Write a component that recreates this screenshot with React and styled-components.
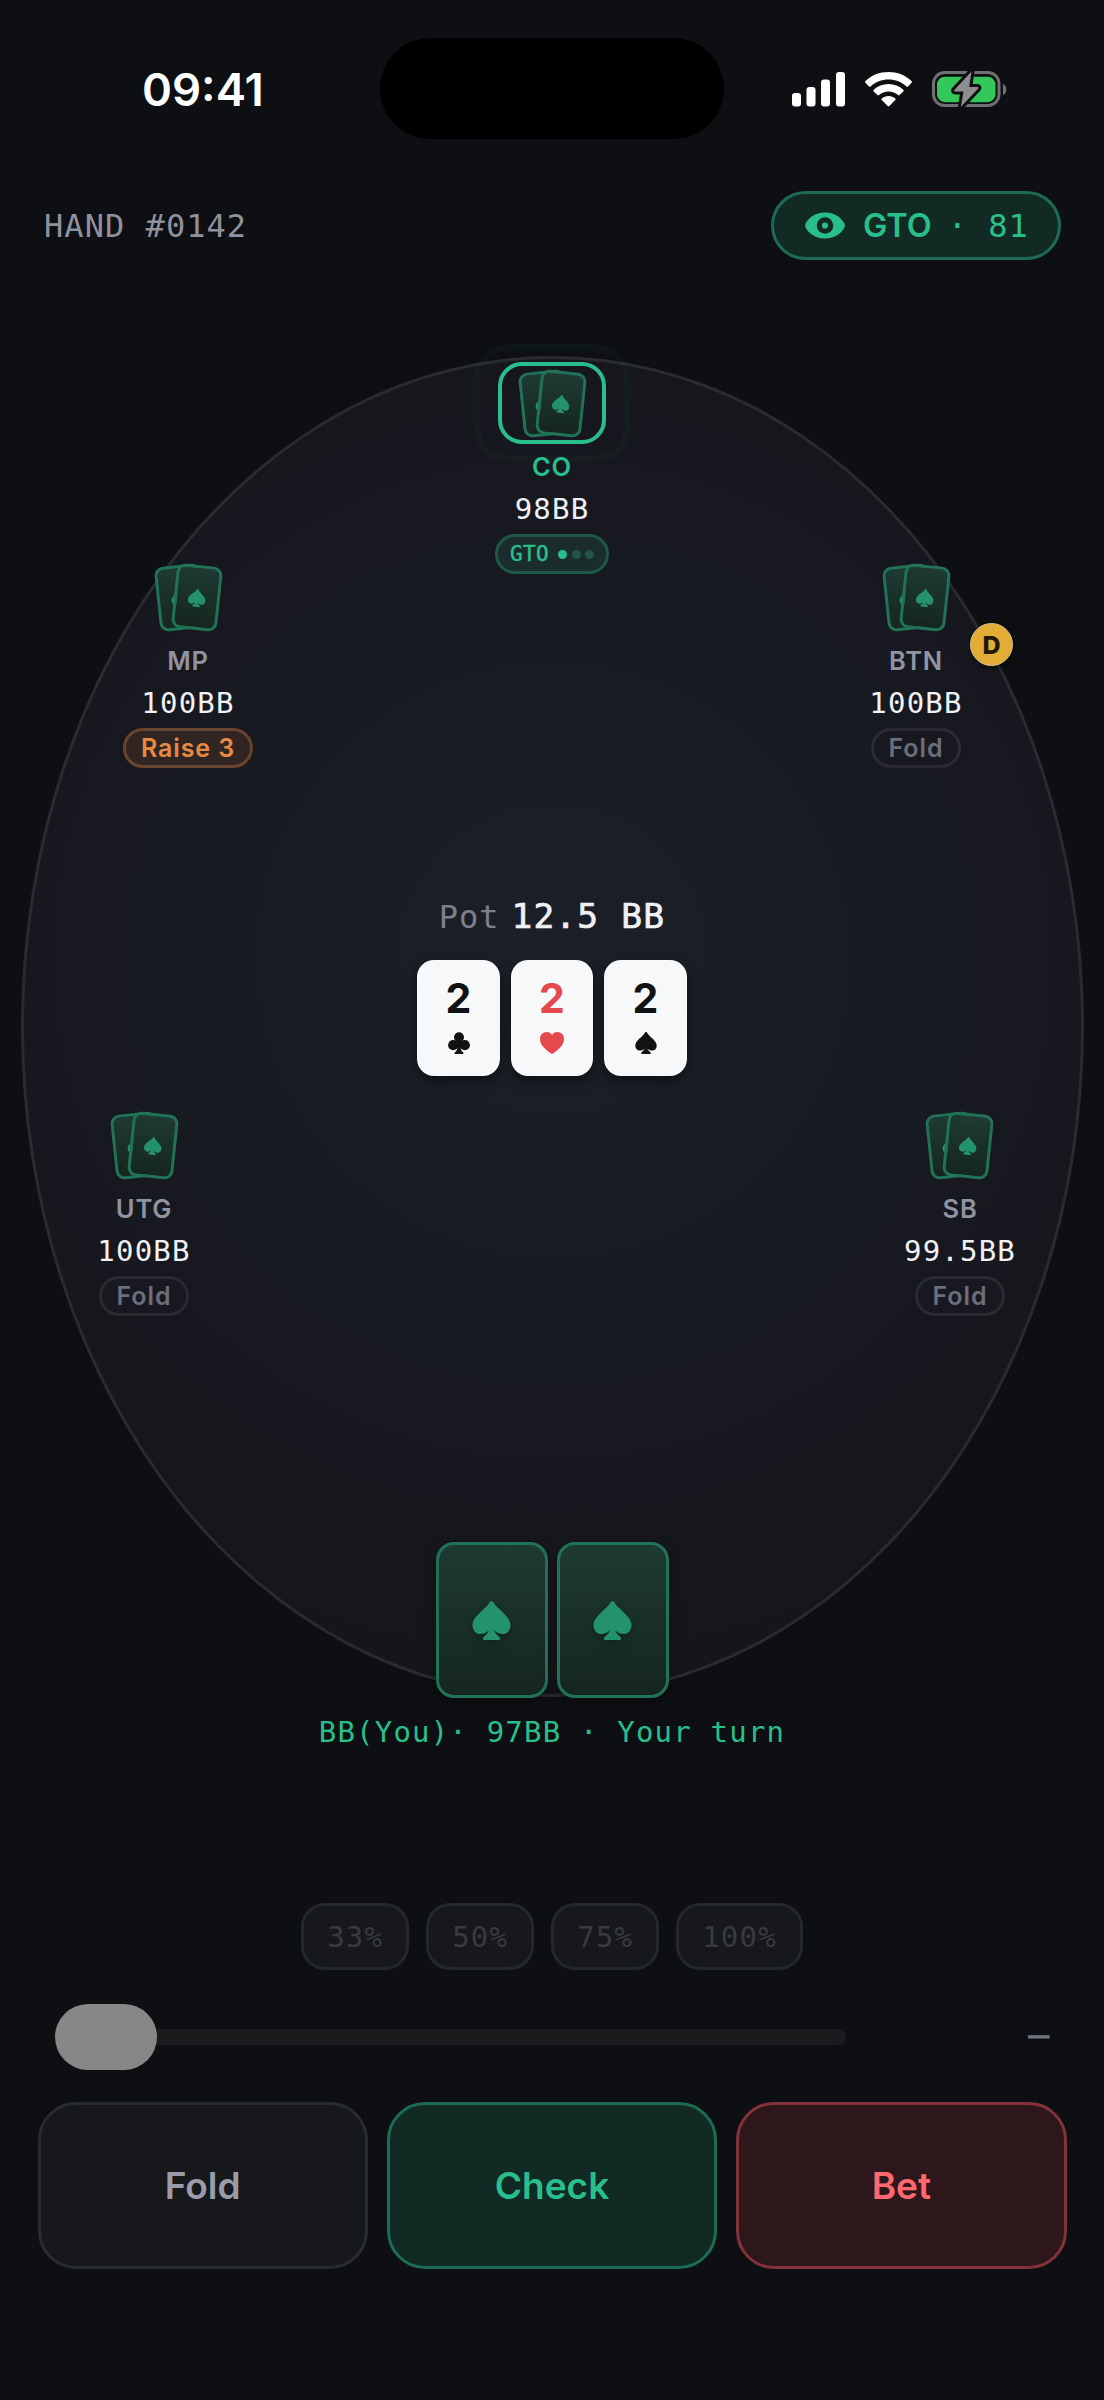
import styled, { createGlobalStyle, css } from 'styled-components'

const mono = "'DejaVu Sans Mono', 'Liberation Mono', monospace"
const SPADE = 'M19 0C20 0 20.8 1 21.5 2.2C25.2 8.6 38 15 38 24.2C38 29.5 34.4 33 30 33C26.6 33 23.6 31.6 21.8 29.2C22.2 32 24.4 33.4 26.6 35.8C28.4 37.8 27.6 39 26 39H12C10.4 39 9.6 37.8 11.4 35.8C13.6 33.4 15.8 32 16.2 29.2C14.4 31.6 11.4 33 8 33C3.6 33 0 29.5 0 24.2C0 15 12.8 8.6 16.5 2.2C17.2 1 18 0 19 0Z'

const seats = [
    { name: 'CO', stack: '98BB', x: 552, y: 88, active: true },
    { name: 'MP', stack: '100BB', x: 188, y: 282, action: 'Raise 3', raise: true },
    { name: 'BTN', stack: '100BB', x: 916, y: 282, action: 'Fold' },
    { name: 'UTG', stack: '100BB', x: 144, y: 830, action: 'Fold' },
    { name: 'SB', stack: '99.5BB', x: 960, y: 830, action: 'Fold' },
]

const board = [
    { rank: '2', suit: 'club' },
    { rank: '2', suit: 'heart' },
    { rank: '2', suit: 'spade' },
]

const Suit = ({ type, size }) => {
    if(type === 'club'){
        return (
            <svg width={size} height={size} viewBox='0 0 22 22' fill='currentColor'>
                <circle cx='11' cy='5.2' r='5' />
                <circle cx='5.2' cy='13.2' r='5.1' />
                <circle cx='16.8' cy='13.2' r='5.1' />
                <path d='M8 8H14L12.6 13.5C12.4 17 13 18.5 15 20.3C16 21.3 15.6 22 14.8 22H7.2C6.4 22 6 21.3 7 20.3C9 18.5 9.6 17 9.4 13.5Z' />
            </svg>
        )
    }
    if(type === 'heart'){
        return (
            <svg width={size + 2} height={size} viewBox='0 0 24 22' fill='currentColor'>
                <path d='M12 22C11.5 22 10.8 21.5 10.3 21.1C4.3 16.6 0 12.4 0 7C0 3 2.8 0 6.5 0C9 0 11 1.2 12 3C13 1.2 15 0 17.5 0C21.2 0 24 3 24 7C24 12.4 19.7 16.6 13.7 21.1C13.2 21.5 12.5 22 12 22Z' />
            </svg>
        )
    }
    return (
        <svg width={size} height={size} viewBox='0 0 38 39' fill='currentColor'>
            <path d={SPADE} />
        </svg>
    )
}

const StatusIcons = () => (
    <svg width='216' height='38' viewBox='0 0 216 38'>
        <g fill='#fff'>
            <rect x='1' y='23' width='9' height='13.5' rx='3' />
            <rect x='15.5' y='17' width='9' height='19.5' rx='3' />
            <rect x='30' y='9.5' width='9' height='27' rx='3' />
            <rect x='45' y='2' width='9' height='34.5' rx='3' />
        </g>
        <g transform='translate(74 2)' fill='#fff'>
            <path d='M23.5 0C14.6 0 6.5 3.3 .5 8.9C-.1 9.5 0 10.2 .4 10.7L4 14.4C4.5 14.9 5.2 14.9 5.7 14.4C10.4 10.1 16.6 7.5 23.5 7.5C30.4 7.5 36.6 10.1 41.3 14.4C41.8 14.9 42.5 14.9 43 14.4L46.6 10.7C47 10.2 47.1 9.5 46.5 8.9C40.5 3.3 32.4 0 23.5 0Z' />
            <path d='M23.5 12C17.8 12 12.6 14.1 8.7 17.7C8.2 18.2 8.2 18.9 8.7 19.4L12.4 23.1C12.9 23.6 13.5 23.5 14 23.1C16.5 20.9 19.9 19.5 23.5 19.5C27.1 19.5 30.5 20.9 33 23.1C33.5 23.5 34.1 23.6 34.6 23.1L38.3 19.4C38.8 18.9 38.8 18.2 38.3 17.7C34.4 14.1 29.2 12 23.5 12Z' />
            <path d='M23.5 24C20.9 24 18.5 24.9 16.7 26.4C16.2 26.9 16.2 27.5 16.7 28L22.7 34.1C23.2 34.6 23.8 34.6 24.3 34.1L30.3 28C30.8 27.5 30.8 26.9 30.3 26.4C28.5 24.9 26.1 24 23.5 24Z' />
        </g>
        <rect x='142.5' y='2.5' width='65.5' height='33' rx='11' fill='none' stroke='#6f7072' strokeWidth='3' />
        <path d='M212 14C216.5 15.5 216.5 23.5 212 25Z' fill='#6f7072' />
        <rect x='146' y='6.7' width='58.5' height='25.5' rx='8' fill='#34c759' />
        <path d='M180.5 1.5L163.5 19.7C162.7 20.6 163.2 21.5 164.3 21.5H172.5L169.8 37L187 18.7C187.8 17.7 187.3 17 186.3 17H178.2Z' fill='#8e8e90' stroke='#0d0f12' strokeWidth='6' strokeLinejoin='round' paintOrder='stroke' />
    </svg>
)

const EyeIcon = () => (
    <svg width='40' height='27' viewBox='0 0 40 27'>
        <path d='M20 .5C9.5 .5 2.7 7 .6 11.6C0 13 0 14 .6 15.4C2.7 20 9.5 26.5 20 26.5C30.5 26.5 37.3 20 39.4 15.4C40 14 40 13 39.4 11.6C37.3 7 30.5 .5 20 .5Z' fill='#29bf8c' />
        <circle cx='20' cy='13.5' r='8.3' fill='#122a24' />
        <circle cx='20' cy='13.5' r='3.1' fill='#29bf8c' />
    </svg>
)

const MiniHand = () => (
    <Hand>
        <MiniCard $tilt={-6}><Suit type='spade' size={18} /></MiniCard>
        <MiniCard $tilt={6}><Suit type='spade' size={18} /></MiniCard>
    </Hand>
)

const Seat = ({ seat }) => (
    <SeatBox $x={seat.x} $y={seat.y}>
        <Ring $active={seat.active}>
            <MiniHand />
        </Ring>
        <Position $active={seat.active}>{seat.name}</Position>
        <Stack>{seat.stack}</Stack>
        {seat.active ? (
            <Thinking>
                GTO
                <Dots><Dot $on /><Dot /><Dot /></Dots>
            </Thinking>
        ) : (
            <Action $raise={seat.raise}>{seat.action}</Action>
        )}
    </SeatBox>
)

const App = () => {
    return (
        <Screen>
            <GlobalStyle />
            <StatusBar>
                <Time>09:41</Time>
                <Island />
                <Icons><StatusIcons /></Icons>
            </StatusBar>
            <Header>
                <HandId>HAND #0142</HandId>
                <Score>
                    <EyeIcon />
                    <b>GTO</b>
                    <span>· 81</span>
                </Score>
            </Header>
            <Table>
                <Felt>
                    <Pot>
                        <span>Pot</span>
                        <strong>12.5 BB</strong>
                    </Pot>
                    <Board>
                        {board.map(card => (
                            <BoardCard key={card.suit} $red={card.suit === 'heart'}>
                                {card.rank}
                                <Suit type={card.suit} size={22} />
                            </BoardCard>
                        ))}
                    </Board>
                </Felt>
                {seats.map(seat => <Seat key={seat.name} seat={seat} />)}
                <Dealer>D</Dealer>
            </Table>
            <Hero>
                <HeroCards>
                    <HeroCard><Suit type='spade' size={39} /></HeroCard>
                    <HeroCard><Suit type='spade' size={39} /></HeroCard>
                </HeroCards>
                <HeroText>BB(You)· 97BB · Your turn</HeroText>
            </Hero>
            <Controls>
                <Presets>
                    {['33%', '50%', '75%', '100%'].map(p => <Preset key={p} disabled>{p}</Preset>)}
                </Presets>
                <SliderRow>
                    <Track><Thumb /></Track>
                    <Amount>–</Amount>
                </SliderRow>
                <Buttons>
                    <Button>Fold</Button>
                    <Button $kind='check'>Check</Button>
                    <Button $kind='bet'>Bet</Button>
                </Buttons>
            </Controls>
        </Screen>
    )
}

const GlobalStyle = createGlobalStyle`
    * {
        box-sizing: border-box;
    }

    body {
        margin: 0;
        background: #0d0f12;
    }

    svg {
        display: block;
        flex-shrink: 0;
    }
`;
const Screen = styled.div`
    width: 1104px;
    height: 2400px;
    overflow: hidden;
    background: #0d0f12;
    font-family: Inter, 'Liberation Sans', sans-serif;
`;
const StatusBar = styled.div`
    display: grid;
    grid-template-columns: 380px 344px 1fr;
    align-items: center;
    height: 177px;
`;
const Time = styled.div`
    padding-left: 142px;
    padding-top: 2px;
    font-size: 45.5px;
    font-weight: 600;
    color: #fff;
`;
const Island = styled.div`
    height: 101px;
    border-radius: 51px;
    background: #000;
`;
const Icons = styled.div`
    padding-left: 67px;
`;
const Header = styled.div`
    display: flex;
    align-items: center;
    justify-content: space-between;
    height: 97px;
    padding: 0 43px 0 44px;
`;
const HandId = styled.div`
    font-family: ${mono};
    font-size: 32px;
    letter-spacing: 1.05px;
    color: #8f929e;
`;
const Score = styled.div`
    display: flex;
    align-items: center;
    width: 290px;
    height: 69px;
    padding-left: 31px;
    border: 3px solid #1e6b53;
    border-radius: 35px;
    background: #122a24;
    color: #29bf8c;

    b {
        margin-left: 18px;
        font-size: 32.5px;
        font-weight: 600;
    }

    span {
        margin-left: 16px;
        font-family: ${mono};
        font-size: 32px;
        letter-spacing: 0.95px;
        white-space: pre;
    }
`;
const Table = styled.div`
    position: relative;
    padding-top: 82px;
`;
const Felt = styled.div`
    display: flex;
    flex-direction: column;
    align-items: center;
    width: 1063px;
    height: 1341px;
    margin: 0 auto;
    padding-top: 535px;
    border: 3px solid #2a2b31;
    border-radius: 50%;
    background: radial-gradient(circle at 50% 45%, #1b2028 0, #181a21 380px, #17181f 520px, #14161a 740px);
`;
const Pot = styled.div`
    display: flex;
    align-items: baseline;
    gap: 12px;
    height: 44px;
    line-height: 44px;
    font-family: ${mono};

    span {
        font-size: 32px;
        letter-spacing: 0.95px;
        color: #7d808b;
    }

    strong {
        font-size: 34.5px;
        font-weight: 400;
        letter-spacing: 1.2px;
        color: #f0f1f5;
        -webkit-text-stroke: 0.7px #f0f1f5;
    }
`;
const Board = styled.div`
    display: flex;
    gap: 11px;
    margin-top: 22px;
`;
const BoardCard = styled.div`
    display: flex;
    flex-direction: column;
    align-items: center;
    gap: 9px;
    width: 82.5px;
    height: 116px;
    padding-top: 13px;
    border-radius: 17px;
    background: #f7f8f9;
    box-shadow: 0 5px 11px rgba(0, 0, 0, 0.45);
    color: ${p => p.$red ? '#e5484d' : '#111214'};
    font-size: 41px;
    font-weight: 700;
    line-height: 50px;
`;
const SeatBox = styled.div`
    position: absolute;
    top: ${p => p.$y}px;
    left: ${p => p.$x}px;
    display: flex;
    flex-direction: column;
    align-items: center;
    transform: translateX(-50%);
`;
const Ring = styled.div`
    position: relative;
    display: flex;
    align-items: center;
    justify-content: center;
    width: 108px;
    height: 82px;
    border-radius: 24px;
    ${p => p.$active && css`
        border: 4px solid #29bf8c;

        /* faint outer pulse around the player to act */
        &:after{
            content: '';
            position: absolute;
            inset: -22px -29px;
            border: 7px solid rgba(41, 191, 140, 0.035);
            border-radius: 36px;
        }
    `}
`;
const Hand = styled.div`
    display: flex;
`;
const cardBack = css`
    display: flex;
    align-items: center;
    justify-content: center;
    border: 3px solid #217358;
    background: linear-gradient(#1e3a33, #15261f);
    color: #24926c;
`;
const MiniCard = styled.div`
    ${cardBack}
    width: 46px;
    height: 65px;
    border-radius: 9px;
    transform: rotate(${p => p.$tilt}deg);

    & + & {
        margin-left: -29px;
    }
`;
const Position = styled.div`
    margin-top: 5px;
    font-size: 25.5px;
    font-weight: 600;
    line-height: 36px;
    letter-spacing: 0.8px;
    color: ${p => p.$active ? '#29bf8c' : '#9194a0'};
`;
const Stack = styled.div`
    margin-top: 4px;
    font-family: ${mono};
    font-size: 29px;
    line-height: 40px;
    letter-spacing: 1.2px;
    color: #f0f1f5;
`;
const pill = css`
    display: flex;
    align-items: center;
    justify-content: center;
    height: 40px;
    margin-top: 5px;
    border-radius: 20px;
    border: 3px solid;
    font-weight: 600;
`;
const Action = styled.div`
    ${pill}
    padding: 0 15px;
    font-size: 25px;
    letter-spacing: 0.9px;
    white-space: nowrap;
    color: ${p => p.$raise ? '#e88a43' : '#6b6e7b'};
    border-color: ${p => p.$raise ? '#68432d' : '#2a2b32'};
    background: ${p => p.$raise ? '#302523' : '#181920'};
`;
const Thinking = styled.div`
    ${pill}
    width: 114px;
    gap: 9px;
    font-family: ${mono};
    font-size: 21px;
    font-weight: 400;
    letter-spacing: 0.4px;
    -webkit-text-stroke: 0.5px #29bf8c;
    color: #29bf8c;
    border-color: #205848;
    background: #1a2c2b;
`;
const Dots = styled.div`
    display: flex;
    gap: 4.5px;
`;
const Dot = styled.i`
    flex: none;
    width: 9px;
    height: 9px;
    border-radius: 50%;
    background: ${p => p.$on ? '#29bf8c' : '#205647'};
`;
const Dealer = styled.div`
    position: absolute;
    top: 349px;
    left: 970px;
    display: flex;
    align-items: center;
    justify-content: center;
    width: 43px;
    height: 43px;
    border: 1.5px solid #d6bf90;
    border-radius: 50%;
    background: #e3ad35;
    box-shadow: 0 3px 8px rgba(0, 0, 0, 0.4);
    color: #20180a;
    font-size: 25px;
    font-weight: 800;
`;
const Hero = styled.div`
    position: relative;
    display: flex;
    flex-direction: column;
    align-items: center;
    margin-top: -155px;
`;
const HeroCards = styled.div`
    display: flex;
    gap: 9px;
`;
const HeroCard = styled.div`
    ${cardBack}
    width: 112px;
    height: 156px;
    border-radius: 18px;
    box-shadow: 0 5px 14px rgba(0, 0, 0, 0.3);

    svg {
        filter: drop-shadow(0 3px 5px rgba(0, 0, 0, 0.25));
    }
`;
const HeroText = styled.div`
    margin-top: 14px;
    font-family: ${mono};
    font-size: 29px;
    line-height: 40px;
    letter-spacing: 1.2px;
    color: #29bf8c;
`;
const Controls = styled.div`
    display: flex;
    flex-direction: column;
    margin-top: 151px;
    padding: 0 37px;
`;
const Presets = styled.div`
    display: flex;
    justify-content: center;
    gap: 17px;
`;
const Preset = styled.button`
    height: 67px;
    padding: 0 23px;
    border: 3px solid #25272f;
    border-radius: 24px;
    background: #16181c;
    color: #383a40;
    font-family: ${mono};
    font-size: 29px;
    letter-spacing: 1.2px;
`;
const SliderRow = styled.div`
    display: flex;
    align-items: center;
    justify-content: space-between;
    height: 67px;
    margin-top: 33px;
    padding: 0 18px;
`;
const Track = styled.div`
    display: flex;
    align-items: center;
    width: 791px;
    height: 16px;
    border-radius: 8px;
    background: #1a1b1d;
`;
const Thumb = styled.div`
    width: 102px;
    height: 66px;
    border-radius: 33px;
    background: #878788;
`;
const Amount = styled.div`
    margin-top: -6px;
    font-family: ${mono};
    font-size: 34px;
    color: #6f717e;
    -webkit-text-stroke: 1px #6f717e;
`;
const Buttons = styled.div`
    display: grid;
    grid-template-columns: repeat(3, 1fr);
    gap: 19px;
    margin-top: 32px;
    padding: 0 0.5px;
`;
const kinds = {
    check: ['#122a24', '#1e6b53', '#29bf8c'],
    bet: ['#2e171a', '#83323a', '#ff6870'],
}
const Button = styled.button`
    height: 167px;
    border: 3px solid ${p => p.$kind ? kinds[p.$kind][1] : '#292b32'};
    border-radius: 38px;
    background: ${p => p.$kind ? kinds[p.$kind][0] : '#17181b'};
    color: ${p => p.$kind ? kinds[p.$kind][2] : '#9a9caa'};
    font-family: inherit;
    font-size: 37px;
    font-weight: 600;
`;

export default App
